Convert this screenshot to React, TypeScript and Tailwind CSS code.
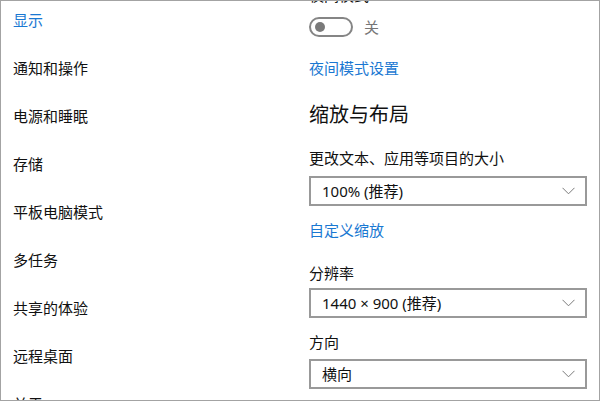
const navItems = [
  "显示",
  "通知和操作",
  "电源和睡眠",
  "存储",
  "平板电脑模式",
  "多任务",
  "共享的体验",
  "远程桌面",
  "关于",
];

function Chevron() {
  return (
    <svg width="13" height="8" viewBox="0 0 13 8" fill="none">
      <path d="M0.5 0.8 L6.5 6.8 L12.5 0.8" stroke="#7a7a7a" strokeWidth="1" />
    </svg>
  );
}

function Select({ value }: { value: string }) {
  return (
    <div className="h-[30px] border-2 border-[#999999] flex items-center justify-between pl-[11px] pr-[10px] text-[15px] text-[#111]">
      <span>{value}</span>
      <Chevron />
    </div>
  );
}

export default function App() {
  return (
    <div
      className="w-[600px] h-[401px] bg-white border border-[#a3a3a3] overflow-hidden flex"
      style={{ fontFamily: '"Noto Sans", "Noto Sans CJK SC", sans-serif' }}
    >
      <div className="w-[308px] shrink-0 pl-[12px] -mt-[5px] flex flex-col">
        {navItems.map((item, i) => (
          <div
            key={item}
            className={
              "h-[48px] shrink-0 flex items-center text-[15px] " +
              (i === 0 ? "text-[#1a78d2]" : "text-[#111]")
            }
          >
            {item}
          </div>
        ))}
      </div>

      <div className="w-[278px] shrink-0 flex flex-col -mt-[16px]">
        <div className="h-[20px] shrink-0 flex items-center text-[15px] text-[#111]">夜间模式</div>
        <div className="mt-[12px] h-[20px] shrink-0 flex items-center gap-[11px]">
          <div className="w-[44px] h-[20px] rounded-full border-2 border-[#858585] flex items-center pl-[4px]">
            <div className="w-[10px] h-[10px] rounded-full bg-[#7a7a7a]" />
          </div>
          <span className="text-[15px] text-[#767676]">关</span>
        </div>
        <div className="mt-[19px] h-[24px] shrink-0 flex items-center text-[15px] text-[#1a78d2]">夜间模式设置</div>
        <div className="mt-[20px] h-[30px] shrink-0 flex items-center text-[20px] text-[#111]">缩放与布局</div>
        <div className="mt-[16px] h-[24px] shrink-0 flex items-center text-[15px] text-[#111]">更改文本、应用等项目的大小</div>
        <div className="mt-[6px]">
          <Select value="100% (推荐)" />
        </div>
        <div className="mt-[12px] h-[24px] shrink-0 flex items-center text-[15px] text-[#1a78d2]">自定义缩放</div>
        <div className="mt-[19px] h-[24px] shrink-0 flex items-center text-[15px] text-[#111]">分辨率</div>
        <div className="mt-[3px]">
          <Select value="1440 × 900 (推荐)" />
        </div>
        <div className="mt-[12px] h-[24px] shrink-0 flex items-center text-[15px] text-[#111]">方向</div>
        <div className="mt-[5px]">
          <Select value="横向" />
        </div>
      </div>
    </div>
  );
}
